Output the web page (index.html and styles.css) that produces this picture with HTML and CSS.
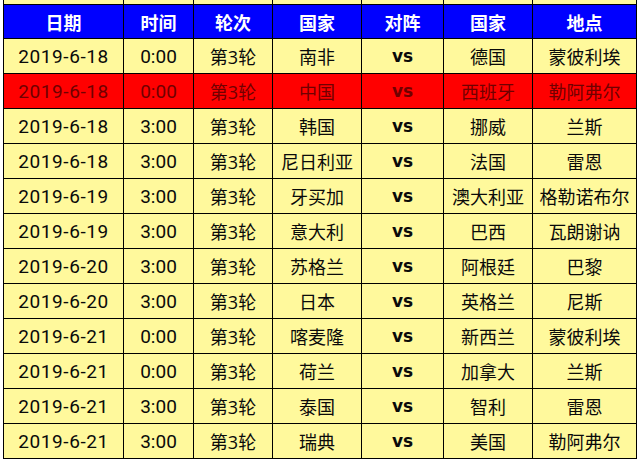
FILE: index.html
```html
<!DOCTYPE html>
<html lang="zh">
<head>
<meta charset="utf-8">
<link rel="stylesheet" href="styles.css">
</head>
<body>
<div class="wrap">
<table class="sched">
<colgroup>
<col class="c1"><col class="c2"><col class="c3"><col class="c4"><col class="c5"><col class="c6"><col class="c7">
</colgroup>
<tr class="cut"><td></td><td></td><td></td><td></td><td></td><td></td><td></td></tr>
<tr class="head"><th>日期</th><th>时间</th><th>轮次</th><th>国家</th><th>对阵</th><th>国家</th><th>地点</th></tr>
<tr><td>2019-6-18</td><td>0:00</td><td>第3轮</td><td>南非</td><td class="vs">vs</td><td>德国</td><td>蒙彼利埃</td></tr>
<tr class="hl"><td>2019-6-18</td><td>0:00</td><td>第3轮</td><td>中国</td><td class="vs">vs</td><td>西班牙</td><td>勒阿弗尔</td></tr>
<tr><td>2019-6-18</td><td>3:00</td><td>第3轮</td><td>韩国</td><td class="vs">vs</td><td>挪威</td><td>兰斯</td></tr>
<tr><td>2019-6-18</td><td>3:00</td><td>第3轮</td><td>尼日利亚</td><td class="vs">vs</td><td>法国</td><td>雷恩</td></tr>
<tr><td>2019-6-19</td><td>3:00</td><td>第3轮</td><td>牙买加</td><td class="vs">vs</td><td>澳大利亚</td><td>格勒诺布尔</td></tr>
<tr><td>2019-6-19</td><td>3:00</td><td>第3轮</td><td>意大利</td><td class="vs">vs</td><td>巴西</td><td>瓦朗谢讷</td></tr>
<tr><td>2019-6-20</td><td>3:00</td><td>第3轮</td><td>苏格兰</td><td class="vs">vs</td><td>阿根廷</td><td>巴黎</td></tr>
<tr><td>2019-6-20</td><td>3:00</td><td>第3轮</td><td>日本</td><td class="vs">vs</td><td>英格兰</td><td>尼斯</td></tr>
<tr><td>2019-6-21</td><td>0:00</td><td>第3轮</td><td>喀麦隆</td><td class="vs">vs</td><td>新西兰</td><td>蒙彼利埃</td></tr>
<tr><td>2019-6-21</td><td>0:00</td><td>第3轮</td><td>荷兰</td><td class="vs">vs</td><td>加拿大</td><td>兰斯</td></tr>
<tr><td>2019-6-21</td><td>3:00</td><td>第3轮</td><td>泰国</td><td class="vs">vs</td><td>智利</td><td>雷恩</td></tr>
<tr><td>2019-6-21</td><td>3:00</td><td>第3轮</td><td>瑞典</td><td class="vs">vs</td><td>美国</td><td>勒阿弗尔</td></tr>
</table>
</div>
</body>
</html>
```
FILE: styles.css
```css
html, body {
  margin: 0;
  padding: 0;
  background: #ffffff;
}
.wrap {
  padding-left: 3px;
  height: 460px;
  overflow: hidden;
}
.sched {
  border-collapse: collapse;
  table-layout: fixed;
  width: 634px;
  font-family: "Open Sans", "Noto Sans CJK SC", sans-serif;
  font-size: 18px;
  color: #0a0a0a;
}
.c1 { width: 120px; }
.c2 { width: 70px; }
.c3 { width: 79px; }
.c4 { width: 89px; }
.c5 { width: 82px; }
.c6 { width: 89px; }
.c7 { width: 104px; }
.sched td, .sched th {
  border: 1px solid #000000;
  padding: 0;
  height: 34px;
  text-align: center;
  vertical-align: middle;
  background: #fff99c;
  white-space: nowrap;
  overflow: hidden;
}
.sched td:nth-child(1),
.sched td:nth-child(2) {
  font-family: Roboto, "Noto Sans CJK SC", sans-serif;
  font-size: 19px;
}
.sched td:nth-child(1) {
  letter-spacing: 0.6px;
}
.sched tr.cut td {
  height: 4px;
  border-top: none;
}
.sched th {
  height: 33px;
  background: #0000ff;
  color: #ffffff;
  font-family: "Noto Sans CJK SC", sans-serif;
  font-weight: bold;
}
.sched td.vs {
  font-weight: bold;
  font-family: "DejaVu Sans", sans-serif;
  font-size: 17px;
}
.sched tr.hl td {
  background: #ff0000;
  color: #700000;
}
```
